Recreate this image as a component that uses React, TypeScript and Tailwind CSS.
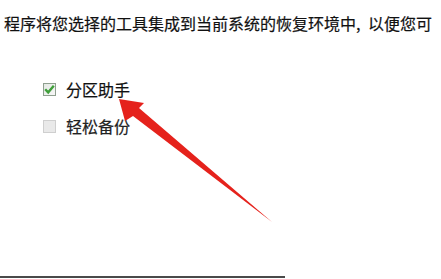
import React from "react";

const font = { fontFamily: '"Noto Sans CJK SC", "Microsoft YaHei", sans-serif' };

function Check({ checked }: { checked: boolean }) {
  return checked ? (
    <div className="w-[13px] h-[13px] border border-[#8f9f8f] bg-gradient-to-br from-[#e4e9e4] to-[#f7f7f7] flex items-center justify-center">
      <svg width="11" height="11" viewBox="0 0 11 11">
        <path d="M1.2 5.2 L4.2 8.4 L9.8 1.8" fill="none" stroke="#3f9f3a" strokeWidth="2.4" />
      </svg>
    </div>
  ) : (
    <div className="w-[13px] h-[13px] border border-[#cfcfcf] bg-[#e9e9e9]" />
  );
}

export default function App() {
  return (
    <div className="relative w-[441px] h-[279px] bg-white overflow-hidden flex flex-col text-[#111]" style={font}>
      <div className="pl-[4px] pt-[15px] text-[16px] leading-4 whitespace-nowrap [-webkit-text-stroke:0.2px_#111]">
        程序将您选择的工具集成到当前系统的恢复环境中<span className="inline-block w-[12px]">,</span>以便您可
      </div>
      <div className="pl-[43px] mt-[50px] flex flex-col gap-[21px]">
        <div className="flex items-center gap-[10px]">
          <Check checked />
          <span className="text-[16px] leading-4 [-webkit-text-stroke:0.2px_#111]">分区助手</span>
        </div>
        <div className="flex items-center gap-[10px]">
          <Check checked={false} />
          <span className="text-[16px] leading-4 text-[#222] [-webkit-text-stroke:0.2px_#222]">轻松备份</span>
        </div>
      </div>
      <div className="mt-auto mb-[1px] w-[285px] h-[2px] bg-[#4a4a4a]" />
      <svg className="absolute left-0 top-0" width="441" height="279" viewBox="0 0 441 279">
        <defs>
          <filter id="soft" x="-10%" y="-10%" width="120%" height="120%">
            <feGaussianBlur stdDeviation="0.7" />
          </filter>
        </defs>
        <polygon
          points="119,99 144,103 139,108 272,222 133,116 125,121"
          fill="#e5231d"
          filter="url(#soft)"
        />
      </svg>
    </div>
  );
}
